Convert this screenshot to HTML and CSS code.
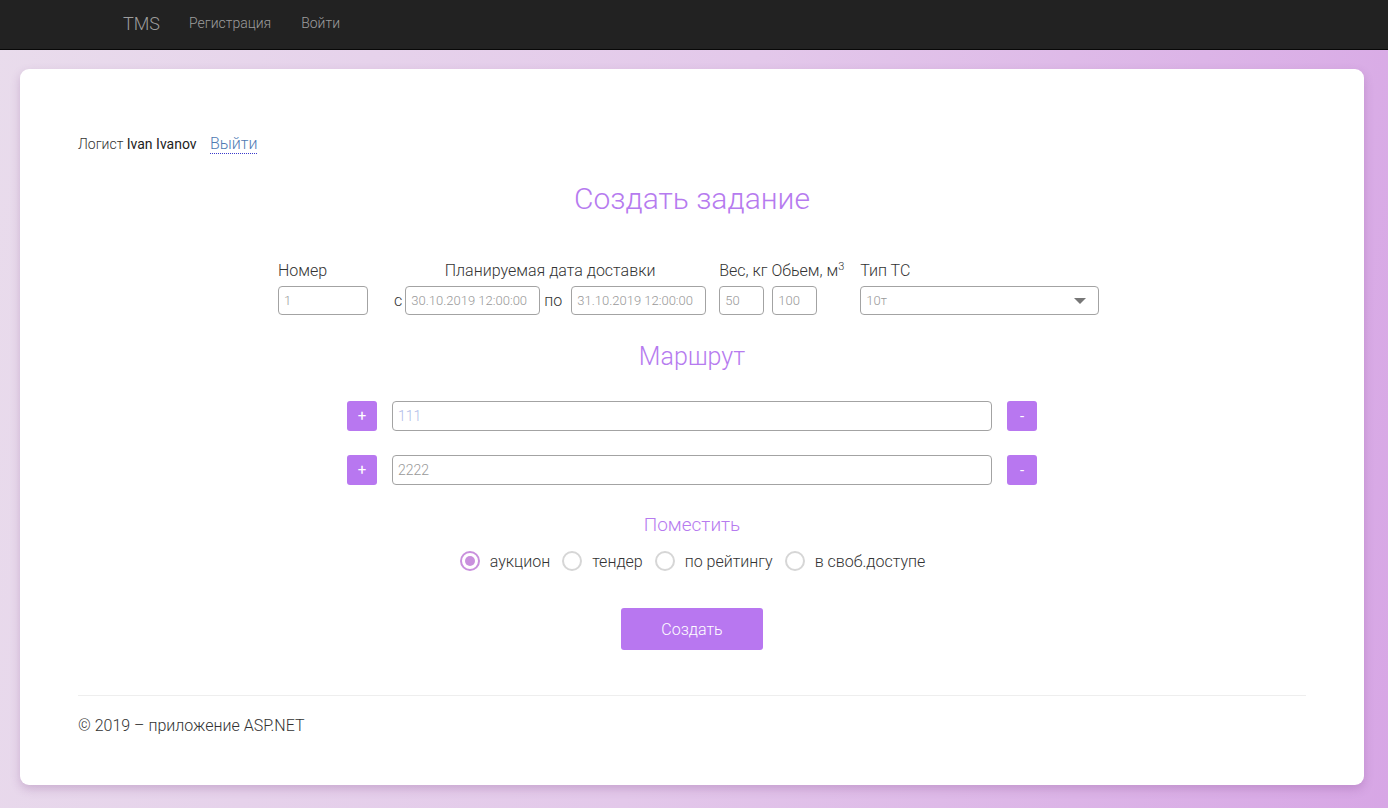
FILE: index.html
```html
<!DOCTYPE html>
<html lang="ru">
<head>
<meta charset="utf-8">
<title>TMS</title>
<link rel="stylesheet" href="styles.css">
</head>
<body>
<nav class="navbar">
  <div class="nav-inner">
    <a class="brand" href="#">TMS</a>
    <a class="nav-link" href="#">Регистрация</a>
    <a class="nav-link" href="#">Войти</a>
  </div>
</nav>
<main class="card">
  <div class="user-line">
    <span class="role">Логист</span> <span class="user">Ivan Ivanov</span>
    <a class="logout" href="#">Выйти</a>
  </div>
  <h1 class="title">Создать задание</h1>
  <div class="form-row">
    <div class="group g-num">
      <label class="lbl">Номер</label>
      <input class="inp inp-num" value="1">
    </div>
    <div class="group g-date">
      <label class="lbl lbl-center">Планируемая дата доставки</label>
      <div class="date-line">
        <span class="sep">с</span>
        <input class="inp inp-date" value="30.10.2019 12:00:00">
        <span class="sep">по</span>
        <input class="inp inp-date" value="31.10.2019 12:00:00">
      </div>
    </div>
    <div class="group g-wv">
      <label class="lbl">Вес, кг Обьем, м<sup>3</sup></label>
      <div class="wv-line">
        <input class="inp inp-small" value="50">
        <input class="inp inp-small" value="100">
      </div>
    </div>
    <div class="group g-type">
      <label class="lbl">Тип ТС</label>
      <div class="select">
        <span>10т</span>
        <span class="caret"></span>
      </div>
    </div>
  </div>
  <h2 class="subtitle">Маршрут</h2>
  <div class="route">
    <div class="route-row">
      <button class="sq">+</button>
      <input class="inp inp-route first" value="111">
      <button class="sq">-</button>
    </div>
    <div class="route-row">
      <button class="sq">+</button>
      <input class="inp inp-route" value="2222">
      <button class="sq">-</button>
    </div>
  </div>
  <h3 class="place">Поместить</h3>
  <div class="radios">
    <label class="radio"><span class="circle checked"></span>аукцион</label>
    <label class="radio"><span class="circle"></span>тендер</label>
    <label class="radio"><span class="circle"></span>по рейтингу</label>
    <label class="radio"><span class="circle"></span>в своб.доступе</label>
  </div>
  <div class="submit-wrap">
    <button class="submit">Создать</button>
  </div>
  <hr class="divider">
  <footer class="footer">© 2019 – приложение ASP.NET</footer>
</main>
</body>
</html>
```

FILE: styles.css
```css
* { box-sizing: border-box; }
html, body { margin: 0; padding: 0; }
body {
  font-family: Roboto, "Liberation Sans", sans-serif;
  font-weight: 300;
  color: #333;
  min-height: 808px;
  background: linear-gradient(100deg, #e9dcec 0%, #e3c8ea 50%, #d7a6e5 100%);
  padding-bottom: 23px;
}
.navbar {
  height: 50px;
  background: #222;
  border-bottom: 1px solid #080808;
}
.nav-inner {
  width: 1170px;
  margin: 0 auto;
  display: flex;
  align-items: center;
  height: 46px;
  padding-left: 14px;
}
.brand {
  color: #9d9d9d;
  font-size: 18px;
  font-weight: 300;
  text-decoration: none;
  margin-right: 29px;
}
.nav-link {
  color: #9d9d9d;
  font-size: 14px;
  font-weight: 300;
  text-decoration: none;
  margin-right: 30px;
}
.card {
  margin: 19px 24px 0 20px;
  background: #fff;
  border-radius: 9px;
  box-shadow: 0 4px 10px rgba(120, 60, 130, 0.25);
  padding: 66px 58px 1px 58px;
  height: 716px;
}
.user-line {
  font-size: 14px;
  line-height: 18px;
  color: #333;
}
.user { color: #222; font-weight: 400; }
.logout {
  margin-left: 10px;
  font-size: 16px;
  color: #4f7ab3;
  text-decoration: none;
  border-bottom: 1px dotted #3a3acc;
}
.title {
  text-align: center;
  font-weight: 300;
  font-size: 30px;
  color: #b67bef;
  margin: 28px 0 0 0;
  line-height: 36px;
}
.form-row {
  display: flex;
  margin: 44px 0 0 200px;
  align-items: flex-start;
}
.group { display: flex; flex-direction: column; }
.lbl {
  font-size: 16px;
  line-height: 19px;
  color: #333;
  margin-bottom: 6px;
  white-space: nowrap;
}
.lbl sup { font-size: 11px; line-height: 0; }
.lbl-center { text-align: center; }
.inp {
  font-family: Roboto, "Liberation Sans", sans-serif;
  font-weight: 300;
  height: 29px;
  border: 1px solid #a3a3a3;
  border-radius: 4px;
  font-size: 13px;
  color: #999;
  padding: 0 5px;
  outline: none;
  background: #fff;
}
.g-num { width: 90px; }
.inp-num { width: 90px; }
.g-date { margin-left: 26px; }
.date-line { display: flex; align-items: center; }
.sep { font-size: 16px; color: #333; }
.date-line .sep:first-child { margin-right: 3px; }
.date-line .sep:nth-child(3) { margin: 0 9px 0 4px; }
.inp-date { width: 135px; padding: 0 5px; }
.g-wv { margin-left: 13px; }
.wv-line { display: flex; gap: 8px; }
.inp-small { width: 45px; }
.g-type { margin-left: 16px; }
.select {
  width: 239px;
  height: 29px;
  border: 1px solid #a3a3a3;
  border-radius: 4px;
  display: flex;
  align-items: center;
  justify-content: space-between;
  padding: 0 12px 0 5px;
  font-size: 13px;
  color: #999;
}
.caret {
  width: 0; height: 0;
  border-left: 6px solid transparent;
  border-right: 6px solid transparent;
  border-top: 6px solid #777;
}
.subtitle {
  text-align: center;
  font-weight: 300;
  font-size: 25px;
  color: #b67bef;
  margin: 27px 0 0 0;
  line-height: 30px;
}
.route { margin-top: 29px; display: flex; flex-direction: column; gap: 24px; }
.route-row { display: flex; justify-content: center; align-items: center; gap: 15px; }
.sq {
  width: 30px; height: 30px;
  border: none;
  border-radius: 3px;
  background: #b877f0;
  color: #fff;
  font-family: Roboto, "Liberation Sans", sans-serif;
  font-size: 15px;
  padding: 0;
}
.inp-route {
  width: 600px;
  height: 30px;
  font-size: 14px;
  color: #999;
}
.inp-route.first { color: #b0bce8; }
.place {
  text-align: center;
  font-weight: 300;
  font-size: 19px;
  color: #b67bef;
  margin: 28px 0 0 0;
  line-height: 24px;
}
.radios {
  display: flex;
  justify-content: center;
  margin-top: 14px;
  margin-left: 1px;
}
.radio {
  display: flex;
  align-items: center;
  font-size: 16px;
  color: #333;
  margin-right: 12px;
}
.radio:last-child { margin-right: 0; }
.circle {
  width: 20px; height: 20px;
  border: 2px solid #d6d6d6;
  border-radius: 50%;
  margin-right: 10px;
  display: inline-flex;
  align-items: center;
  justify-content: center;
}
.circle.checked { border-color: #c990dd; }
.circle.checked::after {
  content: "";
  width: 10px; height: 10px;
  border-radius: 50%;
  background: #c990dd;
}
.submit-wrap { display: flex; justify-content: center; margin-top: 37px; }
.submit {
  width: 142px; height: 42px;
  background: #b877f0;
  border: none;
  border-radius: 3px;
  color: #fff;
  font-family: Roboto, "Liberation Sans", sans-serif;
  font-weight: 300;
  font-size: 16px;
}
.divider {
  border: 0;
  border-top: 1px solid #eee;
  margin: 45px 0 0 0;
}
.footer {
  font-size: 16px;
  color: #333;
  margin-top: 20px;
}
```
